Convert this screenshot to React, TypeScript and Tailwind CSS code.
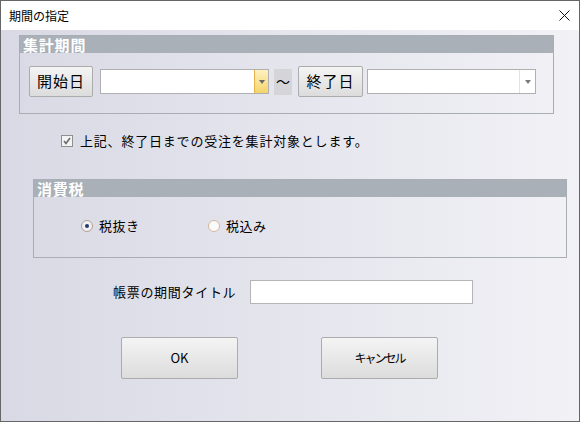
import React from 'react';

const font = "font-['Noto_Sans_CJK_JP','Liberation_Sans',sans-serif]";

function GroupHeader({ title }: { title: string }) {
    return (
        <div className="h-[17px] bg-[#a9b0b7] pl-[3px] text-[15px] leading-[17px] font-bold text-white tracking-[0.8px]">
            {title}
        </div>
    );
}

function Combo({ active }: { active?: boolean }) {
    return (
        <div className="w-[169px] h-[25px] flex border border-[#b0b0b0] bg-white">
            <div className="flex-1" />
            {active ? (
                <div className="w-[14px] h-full flex items-center justify-center border-l border-[#e6b34a] bg-linear-to-b from-[#fdf1bd] to-[#f4d46a]">
                    <div className="w-0 h-0 border-l-[3px] border-r-[3px] border-t-[4px] border-l-transparent border-r-transparent border-t-[#6a6a6a]" />
                </div>
            ) : (
                <div className="w-[16px] h-full flex items-center justify-center border-l border-[#e2e2e2]">
                    <div className="w-0 h-0 border-l-[3px] border-r-[3px] border-t-[4px] border-l-transparent border-r-transparent border-t-[#7a7a7a]" />
                </div>
            )}
        </div>
    );
}

function GrayButton({ label, className }: { label: string; className: string }) {
    return (
        <button className={`${className} flex items-center justify-center border border-[#acacac] rounded-[2px] bg-linear-to-b from-[#f4f4f4] to-[#dcdcdc] text-black`}>
            {label}
        </button>
    );
}

function Radio({ checked, label, className }: { checked?: boolean; label: string; className: string }) {
    return (
        <div className={`${className} flex items-center`}>
            <div className={`w-[12px] h-[12px] rounded-full border flex items-center justify-center ${checked ? 'border-[#b59f8c] bg-[#f0f0f4]' : 'border-[#d4b79c] bg-[#fbfbfb]'}`}>
                {checked && <div className="w-[4px] h-[4px] rounded-full bg-[#243a6a]" />}
            </div>
            <span className="ml-[6px] text-[13px] leading-[14px] tracking-[0.5px]">{label}</span>
        </div>
    );
}

export default function App() {
    return (
        <div className={`w-[580px] h-[422px] border border-[#666666] flex flex-col bg-white text-black ${font}`}>
            {/* Title bar */}
            <div className="h-[29px] flex items-center justify-between pl-[8px] pr-[9px] bg-white">
                <span className="text-[12px] leading-[14px] pt-[1px]">期間の指定</span>
                <svg width="11" height="11" viewBox="0 0 11 11">
                    <path d="M0.5 0.5 L10.5 10.5 M10.5 0.5 L0.5 10.5" stroke="#111" strokeWidth="1" />
                </svg>
            </div>

            {/* Body */}
            <div className="flex-1 flex flex-col bg-linear-to-r from-[#d9d9e5] to-[#f1f1f6]">
                {/* 集計期間 */}
                <div className="ml-[18px] mt-[5px] w-[535px] h-[79px] border border-[#a9aeb5]">
                    <GroupHeader title="集計期間" />
                    <div className="flex items-center mt-[13px] pl-[9px]">
                        <GrayButton label="開始日" className="w-[64px] h-[31px] text-[15px] tracking-[1px]" />
                        <div className="ml-[7px]">
                            <Combo active />
                        </div>
                        <div className="ml-[5px] w-[18px] h-[26px] bg-[#d4d4d9] flex items-center justify-center text-[14px]">～</div>
                        <GrayButton label="終了日" className="ml-[6px] w-[65px] h-[31px] text-[15px] tracking-[1px]" />
                        <div className="ml-[4px]">
                            <Combo />
                        </div>
                    </div>
                </div>

                {/* checkbox */}
                <div className="ml-[60px] mt-[20px] h-[14px] flex items-center">
                    <div className="w-[12px] h-[12px] border border-[#8e8f8f] bg-[#f3f3f3] flex items-center justify-center">
                        <svg width="8" height="8" viewBox="0 0 8 8">
                            <path d="M1 4 L3 6.5 L7 1" stroke="#6b6b6b" strokeWidth="1.6" fill="none" />
                        </svg>
                    </div>
                    <span className="ml-[7px] text-[13px] leading-[14px] tracking-[0.8px]">上記、終了日までの受注を集計対象とします。</span>
                </div>

                {/* 消費税 */}
                <div className="ml-[32px] mt-[31px] w-[534px] h-[79px] border border-[#a9aeb5]">
                    <GroupHeader title="消費税" />
                    <div className="flex items-center mt-[22px] pl-[47px]">
                        <Radio checked label="税抜き" className="w-[127px]" />
                        <Radio label="税込み" className="" />
                    </div>
                </div>

                {/* 帳票の期間タイトル */}
                <div className="mt-[22px] ml-[112px] flex items-center">
                    <span className="w-[137px] text-[13px] leading-[14px] tracking-[0.7px]">帳票の期間タイトル</span>
                    <div className="w-[223px] h-[24px] border border-[#b5b5b5] bg-white" />
                </div>

                {/* buttons */}
                <div className="mt-[33px] ml-[120px] flex gap-[83px]">
                    <GrayButton label="OK" className="w-[117px] h-[42px] text-[13px]" />
                    <GrayButton label="キャンセル" className="w-[117px] h-[42px] text-[12px] tracking-[-2px]" />
                </div>
            </div>
        </div>
    );
}
